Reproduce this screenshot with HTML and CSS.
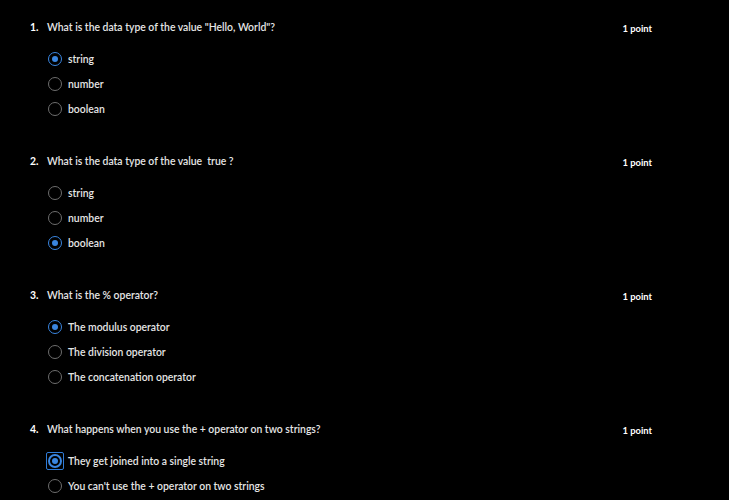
FILE: index.html
```html
<!DOCTYPE html>
<html>
<head>
<meta charset="utf-8">
<link rel="stylesheet" href="styles.css">
</head>
<body>
<div class="quiz">
  <section class="q">
    <div class="q-head"><span class="num">1.</span><span class="text">What is the data type of the value "Hello, World"?</span><span class="pts">1 point</span></div>
    <ul class="opts">
      <li><span class="radio on"></span>string</li>
      <li><span class="radio"></span>number</li>
      <li><span class="radio"></span>boolean</li>
    </ul>
  </section>
  <section class="q">
    <div class="q-head"><span class="num">2.</span><span class="text">What is the data type of the value&nbsp; true ?</span><span class="pts">1 point</span></div>
    <ul class="opts">
      <li><span class="radio"></span>string</li>
      <li><span class="radio"></span>number</li>
      <li><span class="radio on"></span>boolean</li>
    </ul>
  </section>
  <section class="q">
    <div class="q-head"><span class="num">3.</span><span class="text">What is the % operator?</span><span class="pts">1 point</span></div>
    <ul class="opts">
      <li><span class="radio on"></span>The modulus operator</li>
      <li><span class="radio"></span>The division operator</li>
      <li><span class="radio"></span>The concatenation operator</li>
    </ul>
  </section>
  <section class="q">
    <div class="q-head"><span class="num">4.</span><span class="text">What happens when you use the + operator on two strings?</span><span class="pts">1 point</span></div>
    <ul class="opts">
      <li><span class="focus-ring"><span class="radio on"></span></span>They get joined into a single string</li>
      <li><span class="radio"></span>You can't use the + operator on two strings</li>
    </ul>
  </section>
</div>
</body>
</html>
```
FILE: styles.css
```css
html, body {
  margin: 0;
  padding: 0;
  background: #000;
}
body {
  font-family: "Lato", "Open Sans", sans-serif;
  font-size: 10.4px;
  color: #e6e6e6;
  font-weight: 600;
}
.quiz {
  padding: 20px 0 0 30px;
  width: 622px;
}
.q {
  margin-bottom: 38px;
}
.q-head {
  display: flex;
  align-items: center;
  height: 14px;
  line-height: 14px;
}
.num {
  width: 17px;
  font-weight: 700;
  color: #fff;
}
.text {
  flex: 1;
}
.pts {
  font-weight: 700;
  color: #fff;
  font-size: 9.4px;
  align-self: flex-end;
  line-height: 10px;
}
.opts {
  list-style: none;
  margin: 18px 0 0 0;
  padding: 0 0 0 18px;
}
.opts li {
  display: flex;
  align-items: center;
  height: 14px;
  line-height: 14px;
  margin-bottom: 11px;
}
.opts li:last-child {
  margin-bottom: 0;
}
.radio {
  position: relative;
  box-sizing: border-box;
  width: 14px;
  height: 14px;
  border-radius: 50%;
  border: 1.5px solid #6e6e6e;
  margin-right: 6px;
  flex: none;
}
.radio.on {
  border-color: #3a86e0;
}
.radio.on::after {
  content: "";
  position: absolute;
  left: 2.5px;
  top: 2.5px;
  width: 6px;
  height: 6px;
  border-radius: 50%;
  background: #3a86e0;
}
.focus-ring {
  display: flex;
  flex: none;
  box-sizing: border-box;
  width: 18px;
  height: 18px;
  margin: 0 4px 0 -2px;
  padding: 1px;
  border: 1px solid #2f7bd6;
  border-radius: 2px;
}
.focus-ring .radio {
  margin-right: 0;
  border-width: 2px;
}
.focus-ring .radio.on::after {
  left: 2px;
  top: 2px;
}
```
